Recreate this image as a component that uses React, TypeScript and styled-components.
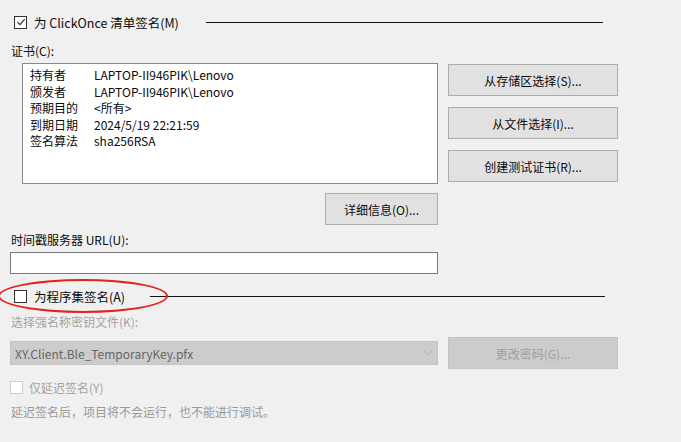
import styled, { createGlobalStyle } from "styled-components";

const GlobalStyle = createGlobalStyle`
  html, body {
    margin: 0;
    padding: 0;
    background: #f0f0f0;
  }
  body {
    font-family: "Noto Sans CJK SC", "Noto Sans", sans-serif;
    font-size: 12px;
    color: #000;
  }
`;

const certRows = [
  { label: "持有者", value: "LAPTOP-II946PIK\\Lenovo" },
  { label: "颁发者", value: "LAPTOP-II946PIK\\Lenovo" },
  { label: "预期目的", value: "<所有>" },
  { label: "到期日期", value: "2024/5/19 22:21:59" },
  { label: "签名算法", value: "sha256RSA" },
];

const storeButtons = ["从存储区选择(S)...", "从文件选择(I)...", "创建测试证书(R)..."];

export default function App() {
  return (
    <>
      <GlobalStyle />
      <Page>
        <GroupHeader $top={15} $lineEnd={78}>
          <CheckBox $checked>
            <svg width="10" height="10" viewBox="0 0 10 10">
              <path d="M1.5 5.2 L4 7.6 L8.7 2.2" fill="none" stroke="#333" strokeWidth="1.2" />
            </svg>
          </CheckBox>
          <HeaderLabel>为 ClickOnce 清单签名(M)</HeaderLabel>
          <Rule $gap={27} />
        </GroupHeader>

        <FieldLabel $top={14}>证书(C):</FieldLabel>

        <CertArea>
          <CertBox>
            {certRows.map((r) => (
              <CertRow key={r.label}>
                <CertKey>{r.label}</CertKey>
                <span>{r.value}</span>
              </CertRow>
            ))}
          </CertBox>
          <ButtonColumn>
            {storeButtons.map((b) => (
              <PushButton key={b}>{b}</PushButton>
            ))}
          </ButtonColumn>
        </CertArea>

        <DetailRow>
          <PushButton $width={113}>详细信息(O)...</PushButton>
        </DetailRow>

        <FieldLabel $top={7}>时间戳服务器 URL(U):</FieldLabel>
        <TextInput />

        <GroupHeader $top={15} $lineEnd={76}>
          <Circled>
            <CheckBox />
            <HeaderLabel>为程序集签名(A)</HeaderLabel>
            <Ellipse />
          </Circled>
          <Rule $gap={25} />
        </GroupHeader>

        <FieldLabel $top={11} $disabled>选择强名称密钥文件(K):</FieldLabel>

        <KeyRow>
          <Combo>
            <span>XY.Client.Ble_TemporaryKey.pfx</span>
            <svg width="10" height="6" viewBox="0 0 10 6">
              <path d="M1 1 L5 5 L9 1" fill="none" stroke="#b5b5b5" strokeWidth="1" />
            </svg>
          </Combo>
          <PushButton $width={170} $disabled>更改密码(G)...</PushButton>
        </KeyRow>

        <DelayRow>
          <CheckBox $disabled />
          <DisabledText>仅延迟签名(Y)</DisabledText>
        </DelayRow>

        <Note>延迟签名后，项目将不会运行，也不能进行调试。</Note>
      </Page>
    </>
  );
}

const Page = styled.div`
  width: 681px;
  height: 442px;
  padding: 0 0 0 10px;
  box-sizing: border-box;
  overflow: hidden;
`;

const GroupHeader = styled.div<{ $top: number; $lineEnd: number }>`
  display: flex;
  align-items: center;
  height: 14px;
  margin-top: ${(p) => p.$top}px;
  margin-right: ${(p) => p.$lineEnd}px;
  padding-left: 4px;
`;

const Circled = styled.div`
  position: relative;
  display: flex;
  align-items: center;
`;

const Ellipse = styled.div`
  position: absolute;
  left: -16px;
  top: 50%;
  transform: translateY(-50%);
  width: 166px;
  height: 30px;
  border: 2.5px solid #e4211d;
  border-radius: 50%;
  pointer-events: none;
`;

const CheckBox = styled.div<{ $checked?: boolean; $disabled?: boolean }>`
  width: 11px;
  height: 11px;
  border: 1px solid ${(p) => (p.$disabled ? "#cfcfcf" : "#333")};
  background: #fff;
  display: flex;
  align-items: center;
  justify-content: center;
  flex-shrink: 0;
`;

const HeaderLabel = styled.span`
  margin-left: 7px;
  font-size: 12.5px;
  white-space: nowrap;
  color: #0a0a0a;
`;

const Rule = styled.div<{ $gap: number }>`
  flex: 1;
  height: 1px;
  background: #111;
  margin-left: ${(p) => p.$gap}px;
`;

const FieldLabel = styled.div<{ $top: number; $disabled?: boolean }>`
  margin-top: ${(p) => p.$top}px;
  font-size: 12px;
  line-height: 16px;
  padding-left: 1px;
  color: ${(p) => (p.$disabled ? "#a3a3a3" : "#0a0a0a")};
`;

const CertArea = styled.div`
  display: flex;
  gap: 10px;
  margin-top: 5px;
  padding-left: 12px;
`;

const CertBox = styled.div`
  width: 407px;
  height: 116px;
  background: #fff;
  border: 1px solid #8a8a8a;
  padding: 3px 0 0 7px;
  box-sizing: content-box;
  margin-top: -1px;
`;

const CertRow = styled.div`
  display: flex;
  height: 16.6px;
  line-height: 16.6px;
  font-size: 12px;
  color: #0a0a0a;
`;

const CertKey = styled.span`
  width: 64px;
`;

const ButtonColumn = styled.div`
  display: flex;
  flex-direction: column;
  gap: 11px;
`;

const PushButton = styled.div<{ $width?: number; $disabled?: boolean }>`
  width: ${(p) => p.$width ?? 170}px;
  height: 32px;
  box-sizing: border-box;
  border: 1px solid ${(p) => (p.$disabled ? "#c4c4c4" : "#adadad")};
  background: ${(p) => (p.$disabled ? "#cccccc" : "#e1e1e1")};
  color: ${(p) => (p.$disabled ? "#a0a0a0" : "#0a0a0a")};
  display: flex;
  align-items: center;
  justify-content: center;
  font-size: 12px;
  white-space: nowrap;
`;

const DetailRow = styled.div`
  display: flex;
  justify-content: flex-end;
  width: 428px;
  margin-top: 9px;
`;

const TextInput = styled.div`
  width: 428px;
  height: 22px;
  box-sizing: border-box;
  margin-top: 4px;
  background: #fff;
  border: 1px solid #7a7a7a;
`;

const KeyRow = styled.div`
  display: flex;
  align-items: center;
  gap: 10px;
  margin-top: 7px;
`;

const Combo = styled.div`
  width: 428px;
  height: 24px;
  box-sizing: border-box;
  background: #cccccc;
  border: 1px solid #c4c4c4;
  display: flex;
  align-items: center;
  justify-content: space-between;
  padding: 0 4px 0 4px;
  font-size: 12px;
  color: #666;
`;

const DelayRow = styled.div`
  display: flex;
  align-items: center;
  margin-top: 12px;
  height: 13px;
`;

const DisabledText = styled.span`
  margin-left: 6px;
  font-size: 12px;
  color: #a3a3a3;
`;

const Note = styled.div`
  margin-top: 10px;
  padding-left: 1px;
  font-size: 12px;
  line-height: 16px;
  color: #9a9a9a;
`;
